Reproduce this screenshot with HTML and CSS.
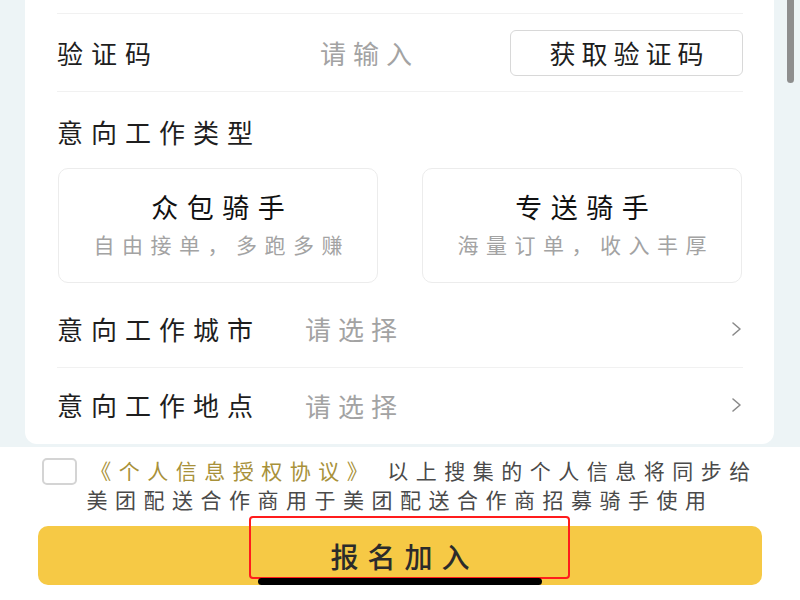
FILE: index.html
```html
<!DOCTYPE html>
<html lang="zh-CN">
<head>
  <meta charset="UTF-8">
  <title>骑手报名</title>
  <link rel="stylesheet" href="styles.css">
</head>

<body>
  <div class="scrollbar"></div>

  <div class="form-card">
    <div class="row prev"></div>

    <div class="row">
      <span class="label code-label">验证码</span>
      <input class="field" type="text" placeholder="请输入" />
      <button class="code-btn">获取验证码</button>
    </div>

    <div class="type-section">
      <div class="label">意向工作类型</div>
      <div class="type-grid">
        <div class="type-card">
          <div class="type-title">众包骑手</div>
          <div class="type-desc">自由接单，多跑多赚</div>
        </div>
        <div class="type-card">
          <div class="type-title">专送骑手</div>
          <div class="type-desc">海量订单，收入丰厚</div>
        </div>
      </div>
    </div>

    <div class="row">
      <span class="label select-label">意向工作城市</span>
      <span class="select-value">请选择</span>
      <svg class="chevron" width="12" height="16" viewBox="0 0 12 16">
        <polyline points="2,2 9,8 2,14" fill="none" stroke="#8a8a8a" stroke-width="1.6" stroke-linecap="round" stroke-linejoin="round" />
      </svg>
    </div>

    <div class="row last">
      <span class="label select-label">意向工作地点</span>
      <span class="select-value">请选择</span>
      <svg class="chevron" width="12" height="16" viewBox="0 0 12 16">
        <polyline points="2,2 9,8 2,14" fill="none" stroke="#8a8a8a" stroke-width="1.6" stroke-linecap="round" stroke-linejoin="round" />
      </svg>
    </div>
  </div>

  <div class="footer">
    <p class="agreement">
      <span class="checkbox"></span><span class="agreement-link">《个人信息授权协议》</span> 以上搜集的个人信息将同步给<br>美团配送合作商用于美团配送合作商招募骑手使用
    </p>

    <div class="submit-wrap">
      <button class="submit-btn">报名加入</button>
      <div class="highlight-box"></div>
      <div class="home-bar"></div>
    </div>
  </div>
</body>
</html>
```

FILE: styles.css
```css
:root {
  --bg: #edf4f6;
  --text: #1e1e1e;
  --muted: #a3a3a3;
  --line: #f1f1f1;
  --gold: #a8913a;
  --yellow: #f6c945;
}

* {
  box-sizing: border-box;
}

body {
  margin: 0;
  height: 600px;
  overflow: hidden;
  position: relative;
  background: var(--bg);
  color: var(--text);
  font-family: "Noto Sans CJK SC", "Noto Sans", sans-serif;
}

.scrollbar {
  position: absolute;
  top: 0;
  right: 6px;
  width: 7px;
  height: 83px;
  border-radius: 0 0 4px 4px;
  background: #8e8e8e;
}

.form-card {
  margin: 0 26px 0 25px;
  padding: 0 31px 0 32px;
  background: #fff;
  border-radius: 0 0 12px 12px;
}

.row {
  display: flex;
  align-items: center;
  height: 78px;
  border-bottom: 1px solid var(--line);
}

.row.prev {
  height: 14px;
}

.row.last {
  height: 76px;
  padding-bottom: 2px;
  border-bottom: none;
}

.label {
  font-size: 26px;
  letter-spacing: 8px;
  line-height: 34px;
  white-space: nowrap;
}

.code-label {
  width: 263px;
}

.select-label {
  width: 248px;
}

.field {
  flex: 1;
  min-width: 0;
  border: none;
  outline: none;
  background: transparent;
  padding: 0;
  font-family: inherit;
  font-size: 26px;
  letter-spacing: 7px;
  color: var(--text);
}

.field::placeholder {
  color: var(--muted);
}

.code-btn {
  width: 233px;
  height: 46px;
  padding: 0 0 0 6px;
  border: 1.5px solid #d8d8d8;
  border-radius: 6px;
  background: #fff;
  font-family: inherit;
  font-size: 26px;
  letter-spacing: 6px;
  color: var(--text);
}

.type-section {
  padding: 23px 0 7px;
}

.type-grid {
  display: grid;
  grid-template-columns: 1fr 1fr;
  gap: 44px;
  margin: 19px 1px 0;
}

.type-card {
  height: 115px;
  display: flex;
  flex-direction: column;
  justify-content: center;
  align-items: center;
  border: 1px solid #ececec;
  border-radius: 10px;
  text-align: center;
}

.type-title {
  font-size: 27px;
  line-height: 34px;
  letter-spacing: 8.5px;
  padding-left: 8.5px;
  color: #111;
}

.type-desc {
  margin-top: 3px;
  font-size: 21px;
  line-height: 34px;
  letter-spacing: 7.5px;
  padding-left: 7.5px;
  color: var(--muted);
}

.select-value {
  flex: 1;
  font-size: 26px;
  letter-spacing: 7px;
  color: var(--muted);
}

.chevron {
  flex-shrink: 0;
}

.footer {
  margin-top: 3px;
  height: 170px;
  padding: 9px 38px 0;
  background: #fff;
}

.agreement {
  margin: 0 -10px;
  text-align: center;
  font-size: 21px;
  line-height: 29px;
  letter-spacing: 7.5px;
  color: #4a4a4a;
  white-space: nowrap;
}

.checkbox {
  display: inline-block;
  width: 35px;
  height: 27px;
  margin-right: 13px;
  vertical-align: -6px;
  border: 2px solid #d4d4d4;
  border-radius: 5px;
}

.agreement-link {
  color: var(--gold);
}

.submit-wrap {
  position: relative;
  margin-top: 12px;
}

.submit-btn {
  display: block;
  width: 100%;
  height: 59px;
  padding: 0 0 0 9px;
  border: none;
  border-radius: 10px;
  background: var(--yellow);
  font-family: inherit;
  font-size: 28px;
  font-weight: 500;
  letter-spacing: 9px;
  color: #2b2b2b;
}

/* annotation drawn on top of the screenshot */
.highlight-box {
  position: absolute;
  left: 211px;
  top: -10px;
  width: 321px;
  height: 63px;
  border: 2.5px solid #ff1c1c;
  border-radius: 4px;
}

.home-bar {
  position: absolute;
  left: 220px;
  top: 52px;
  width: 284px;
  height: 7px;
  border-radius: 4px;
  background: #000;
}
```
